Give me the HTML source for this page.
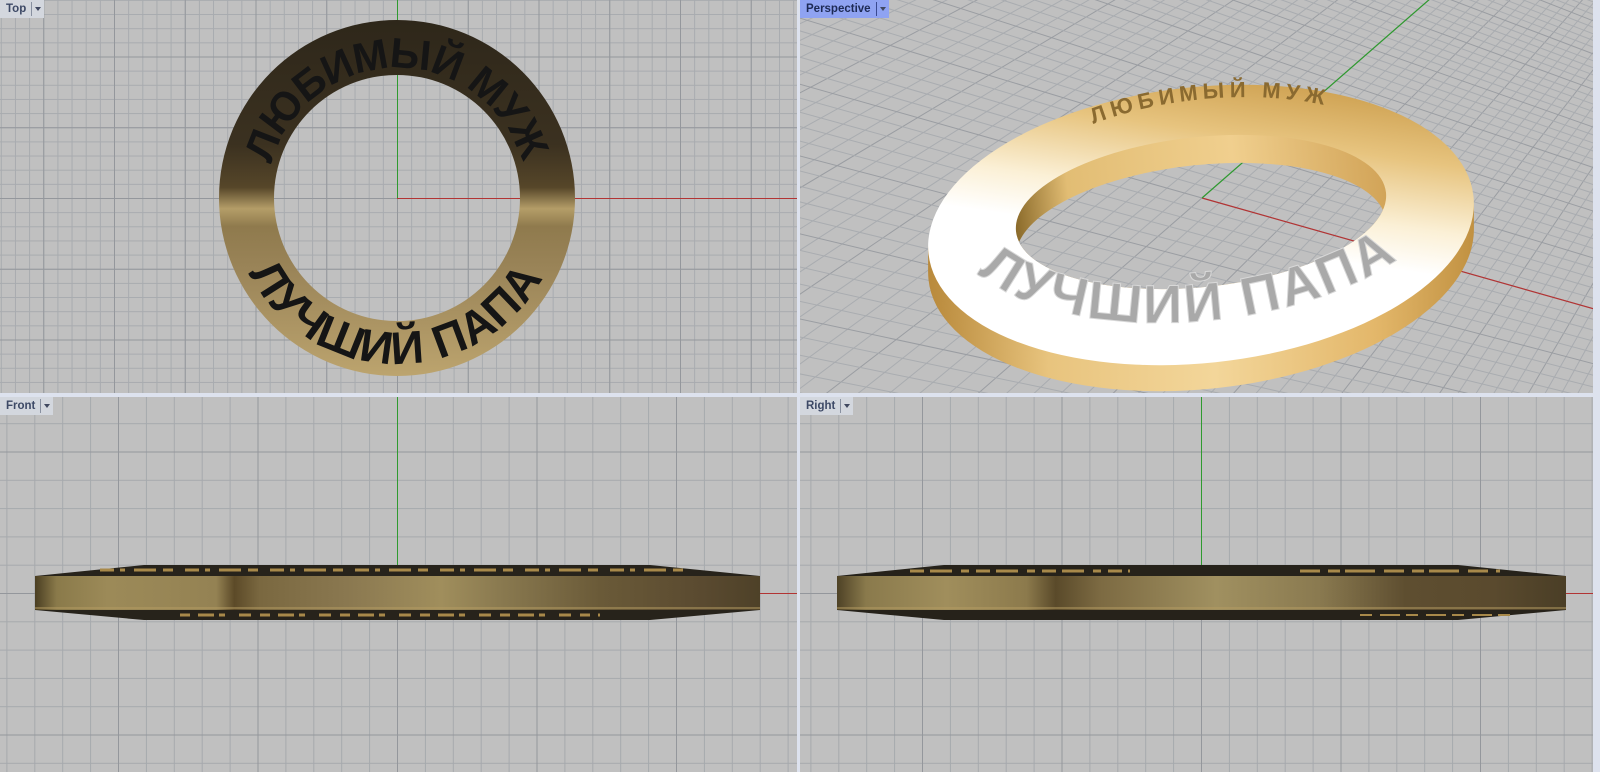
<!DOCTYPE html>
<html><head><meta charset="utf-8"><style>
html,body{margin:0;padding:0;overflow:hidden;width:1600px;height:772px}
body{position:relative;background:#dde2ee;font-family:"Liberation Sans","DejaVu Sans",sans-serif}
.vp{position:absolute;background:#c0c0c0;overflow:hidden}
.vp svg{position:absolute;left:0;top:0;display:block}
.lbl{position:absolute;left:0;top:0;height:18px;line-height:18px;font-size:11.5px;font-weight:bold;color:#3d4966;background:#d3d7de;padding:0 0 0 6px;display:flex;align-items:center}
.lbl .arr{margin-left:5px;width:12px;height:14px;border-left:1px solid #8890a0;position:relative}
.lbl .arr:after{content:"";position:absolute;left:3px;top:5px;border-left:3.5px solid transparent;border-right:3.5px solid transparent;border-top:4px solid #404860}
.act{background:#8fa3f2;color:#1d2a55}
</style></head><body>

<!-- TOP VIEW -->
<div class="vp" style="left:0;top:0;width:797px;height:393px">
<svg width="797" height="393">
<defs>
<pattern id="tmin" patternUnits="userSpaceOnUse" x="397" y="198" width="14.15" height="14.15"><path d="M0.5 0V14.15M0 0.5H14.15" stroke="#a8abaf" stroke-width="1" fill="none"/></pattern>
<pattern id="tmaj" patternUnits="userSpaceOnUse" x="397" y="198" width="70.75" height="70.75"><path d="M0.5 0V70.75M0 0.5H70.75" stroke="#94979c" stroke-width="1" fill="none"/></pattern>
<linearGradient id="tring" x1="0" y1="0" x2="0" y2="1">
<stop offset="0" stop-color="#2e271a"/><stop offset="0.35" stop-color="#3b3120"/><stop offset="0.47" stop-color="#564629"/>
<stop offset="0.53" stop-color="#b49d68"/><stop offset="0.58" stop-color="#8f7a4d"/><stop offset="0.7" stop-color="#9a8458"/><stop offset="1" stop-color="#bca46e"/></linearGradient>
<path id="tp1" d="M 271.4 164.4 A 130 130 0 0 1 522.6 164.4" fill="none"/>
<path id="tp2" d="M 249 273 A 166 166 0 0 0 545 273" fill="none"/>
</defs>
<rect width="797" height="393" fill="url(#tmin)"/>
<rect width="797" height="393" fill="url(#tmaj)"/>
<line x1="397.5" y1="0" x2="397.5" y2="198" stroke="#2f9a2f"/>
<line x1="397" y1="198.5" x2="797" y2="198.5" stroke="#b23434"/>
<path fill="url(#tring)" fill-rule="evenodd" d="M219 198a178 178 0 1 0 356 0a178 178 0 1 0-356 0zM274 198a123 123 0 1 0 246 0a123 123 0 1 0-246 0z"/>
<text font-size="42" font-weight="bold" fill="#151515" font-family="Liberation Sans,sans-serif"><textPath href="#tp1" textLength="338" lengthAdjust="spacing">ЛЮБИМЫЙ МУЖ</textPath></text>
<text font-size="46" font-weight="bold" fill="#151515" font-family="Liberation Sans,sans-serif"><textPath href="#tp2" textLength="360" lengthAdjust="spacing">ЛУЧШИЙ ПАПА</textPath></text>
</svg>
<div class="lbl">Top<span class="arr"></span></div>
</div>

<!-- PERSPECTIVE -->
<div class="vp" style="left:800px;top:0;width:793px;height:393px">
<svg id="ps" width="793" height="393">
<defs>
<linearGradient id="pband" x1="0" y1="0" x2="1" y2="0">
<stop offset="0" stop-color="#b98a3c"/><stop offset="0.2" stop-color="#e8c47e"/><stop offset="0.5" stop-color="#f3d69a"/><stop offset="0.8" stop-color="#e3b76a"/><stop offset="1" stop-color="#c09040"/></linearGradient>
<linearGradient id="ptop" x1="0.75" y1="0" x2="0.25" y2="1">
<stop offset="0" stop-color="#c99a48"/><stop offset="0.22" stop-color="#e7c47f"/><stop offset="0.42" stop-color="#fbf0d6"/><stop offset="0.55" stop-color="#ffffff"/><stop offset="1" stop-color="#ffffff"/></linearGradient>
<linearGradient id="pwall" x1="0" y1="0" x2="1" y2="0">
<stop offset="0" stop-color="#8a6a2a"/><stop offset="0.15" stop-color="#e2bd74"/><stop offset="0.6" stop-color="#f0cf8e"/><stop offset="1" stop-color="#d2a458"/></linearGradient>
<clipPath id="h1"><ellipse cx="401" cy="212" rx="186" ry="75" transform="rotate(-6 401 212)"/></clipPath>
<clipPath id="h2" clip-path="url(#h1)"><ellipse cx="401" cy="240" rx="186" ry="75" transform="rotate(-6 401 240)"/></clipPath>
<path id="pp1" d="M 185 225 A 226 112 -6 0 1 630 170" fill="none"/>
<path id="pp2" d="M 150 225 A 244 118 -6 0 0 652 172" fill="none"/>
</defs>
<rect width="793" height="393" fill="#c0c0c0"/>
<g id="pg"></g>
<g id="ring">
<g fill="url(#pband)">
<ellipse cx="401" cy="251" rx="274" ry="138" transform="rotate(-6 401 251)"/>
<ellipse cx="401" cy="245" rx="274" ry="138" transform="rotate(-6 401 245)"/>
<ellipse cx="401" cy="238" rx="274" ry="138" transform="rotate(-6 401 238)"/>
<ellipse cx="401" cy="231" rx="274" ry="138" transform="rotate(-6 401 231)"/>
</g>
<ellipse cx="401" cy="225" rx="274" ry="138" transform="rotate(-6 401 225)" fill="url(#ptop)"/>
<ellipse cx="401" cy="212" rx="186" ry="75" transform="rotate(-6 401 212)" fill="url(#pwall)"/>
<g clip-path="url(#h2)">
<rect x="0" y="0" width="793" height="393" fill="#c0c0c0"/>
<use href="#pg"/>
</g>
<text font-size="22" font-weight="bold" fill="#8a6a30" font-family="Liberation Sans,sans-serif"><textPath href="#pp1" startOffset="53%" text-anchor="middle" letter-spacing="5">ЛЮБИМЫЙ МУЖ</textPath></text>
<text font-size="54" font-weight="bold" fill="#a9a9a9" stroke="#d8d8d8" stroke-width="1" font-family="Liberation Sans,sans-serif"><textPath href="#pp2" startOffset="46%" text-anchor="middle" letter-spacing="3">ЛУЧШИЙ ПАПА</textPath></text>
</g>
</svg>
<div class="lbl act">Perspective<span class="arr" style="border-left-color:#3a4a90"></span></div>
</div>

<!-- FRONT -->
<div class="vp" style="left:0;top:397px;width:797px;height:375px">
<svg width="797" height="375">
<defs>
<pattern id="fmin" patternUnits="userSpaceOnUse" x="397" y="196" width="27.9" height="28.3"><path d="M0.5 0V28.3M0 0.5H27.9" stroke="#a6a9ad" fill="none"/></pattern>
<pattern id="fmaj" patternUnits="userSpaceOnUse" x="397" y="196" width="139.5" height="141.5"><path d="M0.5 0V141.5M0 0.5H139.5" stroke="#94979c" fill="none"/></pattern>
<linearGradient id="fband" x1="0" y1="0" x2="1" y2="0">
<stop offset="0" stop-color="#4a3e22"/><stop offset="0.03" stop-color="#8a7a4a"/><stop offset="0.1" stop-color="#9c8a58"/><stop offset="0.25" stop-color="#948253"/>
<stop offset="0.275" stop-color="#5c4a28"/><stop offset="0.31" stop-color="#7a6840"/><stop offset="0.43" stop-color="#8a7850"/><stop offset="0.56" stop-color="#a08e5c"/>
<stop offset="0.64" stop-color="#8a7a50"/><stop offset="0.78" stop-color="#6a5a38"/><stop offset="0.92" stop-color="#5a4a30"/><stop offset="1" stop-color="#4e4128"/></linearGradient>
</defs>
<rect width="797" height="375" fill="url(#fmin)"/>
<rect width="797" height="375" fill="url(#fmaj)"/>
<line x1="397.5" y1="0" x2="397.5" y2="168" stroke="#2f9a2f"/>
<line x1="760" y1="196.5" x2="797" y2="196.5" stroke="#b23434"/>
<polygon points="35,179 144,168 650,168 760,179 760,213 650,223 144,223 35,213" fill="#27231b"/>
<line x1="100" y1="173" x2="690" y2="173" stroke="#a8894a" stroke-width="3" stroke-dasharray="14 6 5 9 22 7 10 12"/>
<line x1="180" y1="218" x2="600" y2="218" stroke="#a8894a" stroke-width="3" stroke-dasharray="10 8 16 5 6 14 12 9"/>
<rect x="35" y="179" width="725" height="34" fill="url(#fband)"/>
<line x1="35" y1="211" x2="760" y2="211" stroke="#b59c62" stroke-width="1"/>
</svg>
<div class="lbl">Front<span class="arr"></span></div>
</div>

<!-- RIGHT -->
<div class="vp" style="left:800px;top:397px;width:793px;height:375px">
<svg width="793" height="375">
<defs>
<pattern id="rmin" patternUnits="userSpaceOnUse" x="401" y="196" width="27.9" height="28.3"><path d="M0.5 0V28.3M0 0.5H27.9" stroke="#a6a9ad" fill="none"/></pattern>
<pattern id="rmaj" patternUnits="userSpaceOnUse" x="401" y="196" width="139.5" height="141.5"><path d="M0.5 0V141.5M0 0.5H139.5" stroke="#94979c" fill="none"/></pattern>
<linearGradient id="rband" x1="0" y1="0" x2="1" y2="0">
<stop offset="0" stop-color="#4e4226"/><stop offset="0.04" stop-color="#8a7a4c"/><stop offset="0.15" stop-color="#a08e5c"/><stop offset="0.26" stop-color="#8c7a4c"/>
<stop offset="0.3" stop-color="#5a4a2a"/><stop offset="0.36" stop-color="#7c6a42"/><stop offset="0.52" stop-color="#a09060"/><stop offset="0.66" stop-color="#8a7a50"/>
<stop offset="0.78" stop-color="#5e4e30"/><stop offset="0.9" stop-color="#5a4a2e"/><stop offset="1" stop-color="#4a3e26"/></linearGradient>
</defs>
<rect width="793" height="375" fill="url(#rmin)"/>
<rect width="793" height="375" fill="url(#rmaj)"/>
<line x1="401.5" y1="0" x2="401.5" y2="168" stroke="#2f9a2f"/>
<line x1="766" y1="196.5" x2="793" y2="196.5" stroke="#b23434"/>
<polygon points="37,179 144,168 658,168 766,179 766,213 658,223 144,223 37,213" fill="#26221a"/>
<line x1="110" y1="174" x2="330" y2="174" stroke="#a8894a" stroke-width="3" stroke-dasharray="14 6 22 9 8 7"/>
<line x1="500" y1="174" x2="700" y2="174" stroke="#a8894a" stroke-width="3" stroke-dasharray="20 8 12 5 30 9"/>
<line x1="560" y1="218" x2="710" y2="218" stroke="#a8894a" stroke-width="2" stroke-dasharray="12 8 20 6"/>
<rect x="37" y="179" width="729" height="34" fill="url(#rband)"/>
<line x1="37" y1="211" x2="766" y2="211" stroke="#b59c62" stroke-width="1"/>
</svg>
<div class="lbl">Right<span class="arr"></span></div>
</div>

<script>
(function(){
var a=24.25,ay=6.04,g=0.00577,b=24.4,by=-6.87,h=0.01157;
function P(u,v){var w=1+g*u+h*v;return [((a*u+b*v+1202)/w-800).toFixed(1),((ay*u+by*v+198)/w).toFixed(1)];}
var s='';
for(var u=-40;u<=120;u++){var p=P(u,-40),q=P(u,200);s+='<line x1="'+p[0]+'" y1="'+p[1]+'" x2="'+q[0]+'" y2="'+q[1]+'" stroke="'+(u%5?'#a9acb0':'#9a9da2')+'" stroke-width="1"/>';}
for(var v=-40;v<=200;v++){var p=P(-40,v),q=P(120,v);s+='<line x1="'+p[0]+'" y1="'+p[1]+'" x2="'+q[0]+'" y2="'+q[1]+'" stroke="'+(v%5?'#a9acb0':'#9a9da2')+'" stroke-width="1"/>';}
var o=P(0,0),r=P(120,0),gg=P(0,200);
s+='<line x1="'+o[0]+'" y1="'+o[1]+'" x2="'+r[0]+'" y2="'+r[1]+'" stroke="#b23434" stroke-width="1.2"/>';
s+='<line x1="'+o[0]+'" y1="'+o[1]+'" x2="'+gg[0]+'" y2="'+gg[1]+'" stroke="#2f9a2f" stroke-width="1.2"/>';
document.getElementById('pg').innerHTML=s;
})();
</script>
</body></html>
